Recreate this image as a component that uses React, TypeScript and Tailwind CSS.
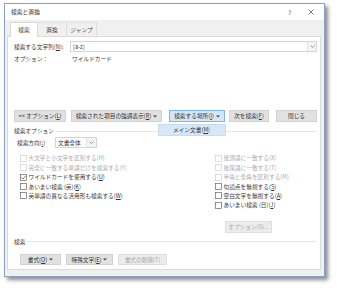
import React from "react";

const font = { fontFamily: '"Noto Sans CJK JP", "Noto Sans", sans-serif' };

function U({ children }: { children: React.ReactNode }) {
  return <span className="underline underline-offset-[1px]">{children}</span>;
}

function Caret() {
  return (
    <svg width="4" height="3" viewBox="0 0 4 3" className="ml-[2px]">
      <path d="M0 0.5 L2 2.5 L4 0.5 Z" fill="#444" />
    </svg>
  );
}

function Chevron() {
  return (
    <svg width="5" height="3" viewBox="0 0 5 3">
      <path d="M0.5 0.5 L2.5 2.5 L4.5 0.5" fill="none" stroke="#777" strokeWidth="0.7" />
    </svg>
  );
}

function Btn({
  w,
  children,
  disabled,
  active,
}: {
  w: string;
  children: React.ReactNode;
  disabled?: boolean;
  active?: boolean;
}) {
  const base = "flex items-center justify-center h-full border leading-none";
  const cls = active
    ? "bg-[#d5e6f7] border-[#7fb4e6] text-[#333]"
    : disabled
    ? "bg-[#ececec] border-[#dedede] text-[#a8a8a8]"
    : "bg-[#e1e1e1] border-[#d2d2d2] text-[#333]";
  return <div className={`${base} ${cls} ${w}`}>{children}</div>;
}

function Check({
  label,
  disabled,
  checked,
}: {
  label: React.ReactNode;
  disabled?: boolean;
  checked?: boolean;
}) {
  return (
    <div className="flex items-center h-[9.4px] leading-none">
      <svg width="7" height="7" viewBox="0 0 7 7" className="shrink-0">
        <rect
          x="0.5"
          y="0.5"
          width="6"
          height="6"
          fill="white"
          stroke={disabled ? "#d0d0d0" : "#666"}
          strokeWidth="0.7"
        />
        {checked && (
          <path d="M1.5 3.5 L3 5 L5.6 2" fill="none" stroke="#444" strokeWidth="0.7" />
        )}
      </svg>
      <span className={`ml-[1.5px] ${disabled ? "text-[#ababab]" : "text-[#383838]"}`}>{label}</span>
    </div>
  );
}

export default function App() {
  return (
    <div className="w-[337px] h-[290px] bg-white pl-[4px] pt-[3px] text-[5.7px]" style={font}>
      <div className="w-[321px] h-[274px] border border-[#8aa3c4] bg-[#f0f0f0] shadow-[3px_3px_4px_rgba(0,0,0,0.45)] flex flex-col">
        {/* title bar */}
        <div className="h-[16px] bg-white flex items-center pl-[6px] pr-[10px] text-[#333]">
          <span className="text-[5.8px]">検索と置換</span>
          <span className="ml-auto mr-[17px] text-[6px]">?</span>
          <svg width="6" height="6" viewBox="0 0 6 6">
            <path d="M0.5 0.5 L5.5 5.5 M5.5 0.5 L0.5 5.5" stroke="#444" strokeWidth="0.7" />
          </svg>
        </div>
        {/* body */}
        <div className="flex-1 flex flex-col pl-[2px] pr-[3px] pt-[2px] pb-[6px]">
          {/* tabs */}
          <div className="h-[14px] flex pl-[3px] relative z-10 leading-none text-[#444]">
            <div className="w-[28px] h-[15px] bg-white border border-b-0 border-[#d9d9d9] flex items-center justify-center pb-[1px]">
              検索
            </div>
            <div className="w-[29px] h-[14px] border-r border-t border-[#e0e0e0] flex items-center justify-center">
              置換
            </div>
            <div className="w-[30px] h-[14px] border-r border-t border-[#e0e0e0] flex items-center justify-center">
              ジャンプ
            </div>
          </div>
          {/* panel */}
          <div className="flex-1 bg-white border border-[#dadada] relative pl-[6px] text-[#383838]">
            {/* find row */}
            <div className="mt-[4px] h-[11px] flex items-center">
              <div className="w-[56px] leading-none">
                検索する文字列(<U>N</U>):
              </div>
              <div className="w-[247px] h-full border border-[#d5d5d5] flex items-center pl-[2px] leading-none">
                <span>[a-z]</span>
                <div className="ml-auto h-full w-[9px] border-l border-[#e3e3e3] bg-[#f4f4f4] flex items-center justify-center">
                  <Chevron />
                </div>
              </div>
            </div>
            {/* options row */}
            <div className="mt-[3px] h-[8px] flex items-center leading-none">
              <div className="w-[58px]">オプション：</div>
              <div>ワイルドカード</div>
            </div>
            {/* buttons row */}
            <div className="mt-[47px] h-[12px] flex">
              <Btn w="w-[52px]">
                &lt;&lt; オプション(<U>L</U>)
              </Btn>
              <div className="w-[5px]" />
              <Btn w="w-[91px]">
                検索された項目の強調表示(<U>R</U>)
                <Caret />
              </Btn>
              <div className="w-[7px]" />
              <Btn w="w-[56px]" active>
                検索する場所(<U>I</U>)
                <Caret />
              </Btn>
              <div className="w-[4px]" />
              <Btn w="w-[40px]">
                次を検索(<U>F</U>)
              </Btn>
              <div className="w-[7px]" />
              <Btn w="w-[41px]">閉じる</Btn>
            </div>
            {/* dropdown menu overlay */}
            <div className="absolute left-[150px] top-[87px] w-[68px] h-[12px] bg-[#d6e7f8] border border-[#c6dcf1] flex items-center pl-[14px] leading-none z-20">
              メイン文書(<U>M</U>)
            </div>
            {/* search options header */}
            <div className="mt-[5px] h-[8px] flex items-center leading-none">
              <span>検索オプション</span>
              <div className="flex-1 h-px bg-[#e6e6e6] ml-[2px] mr-[3px]" />
            </div>
            {/* direction */}
            <div className="mt-[2px] h-[11px] flex items-center leading-none pl-[3px]">
              <div className="w-[38px]">
                検索方向(<U>:</U>)
              </div>
              <div className="w-[42px] h-full border border-[#d5d5d5] flex items-center pl-[2px]">
                <span>文書全体</span>
                <div className="ml-auto h-full w-[10px] border-l border-[#e3e3e3] bg-[#f4f4f4] flex items-center justify-center">
                  <Chevron />
                </div>
              </div>
            </div>
            {/* checkboxes */}
            <div className="mt-[5.6px] flex">
              <div className="w-[201px] pl-[6px] flex flex-col">
                <Check disabled label="大文字と小文字を区別する(H)" />
                <Check disabled label="完全に一致する単語だけを検索する(Y)" />
                <Check
                  checked
                  label={
                    <>
                      ワイルドカードを使用する(<U>U</U>)
                    </>
                  }
                />
                <Check
                  label={
                    <>
                      あいまい検索 (英)(<U>K</U>)
                    </>
                  }
                />
                <Check
                  label={
                    <>
                      英単語の異なる活用形も検索する(<U>W</U>)
                    </>
                  }
                />
              </div>
              <div className="flex flex-col">
                <Check disabled label="接頭語に一致する(X)" />
                <Check disabled label="接尾語に一致する(T)" />
                <Check disabled label="半角と全角を区別する(M)" />
                <Check
                  label={
                    <>
                      句読点を無視する(<U>S</U>)
                    </>
                  }
                />
                <Check
                  label={
                    <>
                      空白文字を無視する(<U>A</U>)
                    </>
                  }
                />
                <Check
                  label={
                    <>
                      あいまい検索 (日)(<U>J</U>)
                    </>
                  }
                />
              </div>
            </div>
            {/* options button */}
            <div className="mt-[11px] h-[12px] flex pl-[211px]">
              <Btn w="w-[47px]" disabled>
                オプション(S)...
              </Btn>
            </div>
            {/* search header */}
            <div className="mt-[5px] h-[8px] flex items-center leading-none">
              <span>検索</span>
              <div className="flex-1 h-px bg-[#e6e6e6] ml-[2px] mr-[3px]" />
            </div>
            {/* bottom buttons */}
            <div className="mt-[8px] h-[11px] flex pl-[6px]">
              <Btn w="w-[41px]">
                書式(<U>O</U>)
                <Caret />
              </Btn>
              <div className="w-[5px]" />
              <Btn w="w-[47px]">
                特殊文字(<U>E</U>)
                <Caret />
              </Btn>
              <div className="w-[5px]" />
              <Btn w="w-[49px]" disabled>
                書式の削除(T)
              </Btn>
            </div>
          </div>
        </div>
      </div>
    </div>
  );
}
